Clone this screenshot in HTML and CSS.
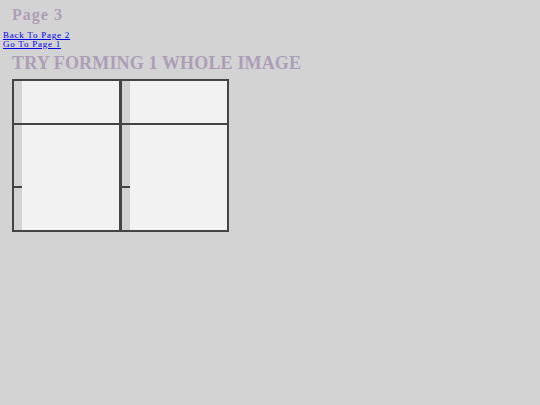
FILE: index.html
```html
<!DOCTYPE html>
<html>
<head>
<meta charset="utf-8">
<title>Page 3</title>
<link rel="stylesheet" href="styles.css">
</head>
<body>
<h1 class="title">Page 3</h1>
<nav class="links">
  <a href="#">Back To Page 2</a><br>
  <a href="#">Go To Page 1</a>
</nav>
<h2 class="subtitle">TRY FORMING 1 WHOLE IMAGE</h2>
<div class="grid">
  <div class="col">
    <div class="cell cell-top"><div class="strip"></div></div>
    <div class="cell cell-bottom"><div class="strip"><span class="tick"></span></div></div>
  </div>
  <div class="col">
    <div class="cell cell-top"><div class="strip"></div></div>
    <div class="cell cell-bottom"><div class="strip"><span class="tick"></span></div></div>
  </div>
</div>
</body>
</html>
```
FILE: styles.css
```css
html, body {
  margin: 0;
  padding: 0;
  background: #d3d3d3;
}
body {
  font-family: "Liberation Serif", "Times New Roman", serif;
}
.title {
  margin: 6px 0 0 12px;
  font-size: 16px;
  line-height: 18px;
  font-weight: bold;
  letter-spacing: 1px;
  color: #ad9eb8;
}
.links {
  margin: 7px 0 0 3px;
  font-size: 9px;
  line-height: 9px;
  letter-spacing: 0.75px;
}
.links a {
  color: #0000ee;
  text-decoration: underline;
}
.subtitle {
  margin: 4px 0 0 12px;
  font-size: 18px;
  line-height: 20px;
  font-weight: bold;
  letter-spacing: 0.15px;
  color: #ad9eb8;
}
.grid {
  margin: 6px 0 0 12px;
  width: 213px;
  height: 149px;
  padding: 2px;
  background: #444;
  display: flex;
  gap: 3px;
  box-sizing: content-box;
}
.col {
  flex: 1;
  display: flex;
  flex-direction: column;
  gap: 2px;
}
.cell {
  background: #f2f2f2;
  display: flex;
}
.cell-top {
  height: 42px;
}
.cell-bottom {
  flex: 1;
}
.strip {
  width: 8px;
  background: #d3d3d3;
  position: relative;
}
.tick {
  position: absolute;
  left: 0;
  right: 0;
  top: 61px;
  height: 2px;
  background: #444;
}
```
